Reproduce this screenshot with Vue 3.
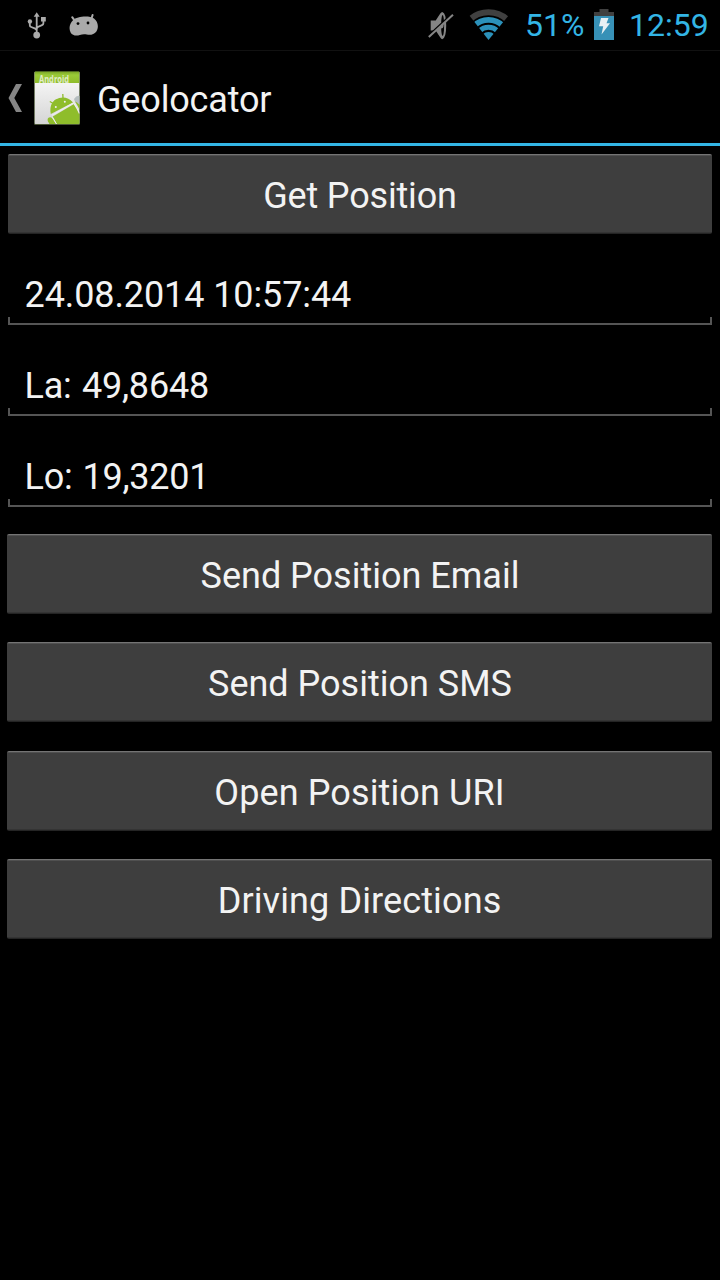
<script setup>
const fields = [
  { text: '24.08.2014 10:57:44', cls: 'date' },
  { text: 'La: 49,8648', cls: 'lat' },
  { text: 'Lo: 19,3201', cls: 'lon' },
]
const actions = [
  { text: 'Send Position Email', cls: 'email' },
  { text: 'Send Position SMS', cls: 'sms' },
  { text: 'Open Position URI', cls: 'uri' },
  { text: 'Driving Directions', cls: 'drive' },
]
</script>

<template>
  <main class="screen">
    <div class="status">
      <svg class="usb" width="20" height="28" viewBox="0 0 20 28" fill="none" stroke="#aaa" stroke-width="1.8">
        <path d="M9.700 4v18M2.800 9.500v3.700q0 1.300 1.400 1.800l4 1.600 1.500 1.600M16.400 8v3.200q0 1.300-1.400 1.900l-4.100 1.800-1.200 1.600" />
        <path d="M9.700 .3l3 4.400H6.700z" fill="#aaa" stroke="none" />
        <circle cx="2.900" cy="9.400" r="2.200" fill="#aaa" stroke="none" />
        <path d="M14 5h4.800v4.500H14z" fill="#aaa" stroke="none" />
        <circle cx="9.700" cy="23.100" r="3.400" fill="#aaa" stroke="none" />
      </svg>
      <svg class="droid" width="30" height="24" viewBox="0 0 30 24">
        <path d="M3.200 4.200l3 4.200M23.600 2l-1.400 4.500" stroke="#aaa" stroke-width="2" stroke-linecap="round" />
        <path d="M4 7.200C8 3.200 20 2.200 25 5.400c4.400 3.200 4.800 9.400 2.400 13-2.400 3.400-6.200 3.700-9.600 3.100-2.600-.5-4.400-.4-7 .5-3.800 1.200-7.400.4-9.200-2.600C-.4 15.600.5 10.500 4 7.200z" fill="#aaa" />
        <circle cx="9" cy="10.600" r="1.400" fill="#000" /><circle cx="19" cy="10" r="1.400" fill="#000" />
      </svg>
      <span class="grow"></span>
      <svg class="mute" width="26" height="30" viewBox="0 0 26 30">
        <path d="M2.700 8.500h5L12.300 1.500Q13.300 0 14.300 0 18.200 1 18.200 13.500T14.300 27.200q-1 0-2-1.700L7.700 18.500h-5z" fill="#858585" />
        <ellipse cx="14.600" cy="13.500" rx="1.500" ry="10.500" fill="#000" />
        <path d="M13 10.500q2.600.2 2.600 3t-2.600 3z" fill="#858585" />
        <path d="M.8 23.500L24.200 1.800" stroke="#000" stroke-width="2" />
        <path d="M.8 25L25 2.800" stroke="#858585" stroke-width="2" />
      </svg>
      <svg class="wifi" width="40" height="32" viewBox="0 0 40 32">
        <clipPath id="fan"><path d="M19.500 31L0 6V0h40v6z" /></clipPath>
        <g clip-path="url(#fan)" fill="none">
          <circle cx="19.500" cy="31" r="27.800" stroke="#404040" stroke-width="6" />
          <circle cx="19.500" cy="31" r="20.100" stroke="#2b91ba" stroke-width="5.600" />
          <circle cx="19.500" cy="31" r="12.800" stroke="#2b91ba" stroke-width="5" />
          <circle cx="19.500" cy="31" r="8" fill="#2b91ba" />
        </g>
      </svg>
      <span class="percent">51%</span>
      <svg class="battery" width="20" height="31" viewBox="0 0 20 31">
        <path d="M5.500 0h9v3H20v4H0V3h5.500z" fill="#404040" />
        <path d="M0 7h20v24H0z" fill="#3791b7" />
        <path d="M7 9h7.500l-2 5.300h3.500L7.500 25.500l1.700-8.300H5z" fill="#e8f0f4" />
      </svg>
      <span class="clock">12:59</span>
    </div>
    <header class="bar">
      <svg class="back" width="14" height="28" viewBox="0 0 14 28"><path d="M8 0h6L6.300 14 14 28H8L.5 14z" fill="#858585" /></svg>
      <svg class="app" width="46" height="54" viewBox="0 0 46 54">
        <defs>
          <linearGradient id="paper" x2="0" y2="1"><stop stop-color="#fcfcfc" /><stop offset="1" stop-color="#d5d5d5" /></linearGradient>
          <linearGradient id="lid" x2="0" y2="1"><stop stop-color="#79a526" /><stop offset=".3" stop-color="#9aca38" /><stop offset="1" stop-color="#8fbc2b" /></linearGradient>
          <clipPath id="page"><rect x=".5" width="45" height="53" rx="1" /></clipPath>
        </defs>
        <rect y=".5" width="46" height="53.500" rx="1.500" fill="#4b5738" />
        <g clip-path="url(#page)">
          <rect x=".5" y="1" width="45" height="52" fill="url(#paper)" />
          <rect x=".5" y=".5" width="45" height="11.500" fill="url(#lid)" />
          <text x="5" y="12" textLength="30" lengthAdjust="spacingAndGlyphs" class="brand">Android</text>
          <path d="M40 28q2.500-4 6-3v9q-5-1-6-6z" fill="#b6bec0" />
          <path d="M16.800 43C15.500 36 17.500 31 22 28.300S34 25 39 31.500z" fill="#8fbd2b" />
          <path d="M15.800 30.500l4 2.200M28.800 23l.2 4" stroke="#8fbd2b" stroke-width="1.300" />
          <circle cx="21.800" cy="36" r="1" fill="#eee" /><circle cx="30.800" cy="30.700" r="1" fill="#eee" />
          <path d="M18.800 45.500L40 33q4 5 6 10.500V54H23.500z" fill="#8fbd2b" />
          <path d="M18 44.300L39.600 32" stroke="#eee" stroke-width="1.200" />
          <path d="M40 32.500q3.300 5 5.500 10" stroke="#eee" stroke-width="1.300" fill="none" />
          <path d="M41 30.500q2.500 4 5 9v-6q-2-.4-3-2z" fill="#8fbd2b" />
          <path d="M14 50.500q-1.200-3 1-4t4 1.500L23 54h-7z" fill="#8fbd2b" />
          <path d="M18.500 46.500l4.500 7.500" stroke="#eee" stroke-width="1" />
        </g>
      </svg>
      <h1>Geolocator</h1>
    </header>
    <button class="btn first"><span class="get">Get Position</span></button>
    <div class="fields">
      <div v-for="f in fields" :key="f.cls" class="field"><span :class="f.cls">{{ f.text }}</span></div>
    </div>
    <div class="actions">
      <button v-for="a in actions" :key="a.cls" class="btn"><span :class="a.cls">{{ a.text }}</span></button>
    </div>
  </main>
</template>

<style>
body { background: #000; }
</style>

<style scoped>
.screen { box-sizing: border-box; width: 720px; height: 1280px; background: #000; color: #f3f3f3; font-family: Roboto, sans-serif; font-size: 36px; overflow: hidden; }
.status { box-sizing: border-box; height: 51px; display: flex; align-items: flex-start; border-bottom: 1px solid #111; color: #33b5e5; font-size: 32px; line-height: 38px; }
.status svg { flex: none; }
.usb { margin: 12px 0 0 27px; }
.droid { margin: 13px 0 0 22px; }
.grow { flex: 1; }
.mute { margin: 12px 15px 0 0; }
.wifi { margin: 9px 16px 0 0; }
.percent { width: 69px; margin-top: 6px; white-space: nowrap; }
.battery { margin: 9px 0 0; }
.clock { width: 91px; margin: 6px 0 0 15px; white-space: nowrap; }
.bar { box-sizing: border-box; height: 95px; border-bottom: 3px solid #33b5e5; display: flex; align-items: flex-start; }
.back { margin: 33px 0 0 8px; }
.app { margin: 20px 0 0 12px; }
.brand { font: bold 10px "Open Sans", sans-serif; fill: #e1edc8; }
h1 { margin: 28px 0 0 17px; font-size: 36px; font-weight: 400; line-height: 42px; letter-spacing: -.17px; white-space: nowrap; }
.btn { display: flex; justify-content: center; box-sizing: border-box; width: 705px; height: 80px; margin: 0 0 0 7px; padding: 21px 0 0; border: 0; border-radius: 2px; background: linear-gradient(#747474 0 1px, #505050 1px 2px, #3e3e3e 2px 78px, #343434 78px 79px, #242424 79px); color: #f3f3f3; font: 36px/42px Roboto, sans-serif; white-space: nowrap; }
.first { width: 704px; margin: 8px 0 0 8px; }
.get { letter-spacing: -.17px; }
.email, .sms { padding-left: 1px; }
.uri, .drive { letter-spacing: .12px; }
.fields { display: grid; grid-template-rows: repeat(3, 91px); width: 704px; margin-left: 8px; }
.field { box-sizing: border-box; padding: 40px 0 0 16.5px; line-height: 42px; white-space: nowrap; background: linear-gradient(#555, #555) 0 100% / 100% 2px no-repeat, linear-gradient(#555, #555) 0 100% / 2px 8px no-repeat, linear-gradient(#555, #555) 100% 100% / 2px 8px no-repeat; }
.date { letter-spacing: -.1px; }
.lat { letter-spacing: -.2px; word-spacing: 1.6px; }
.lon { letter-spacing: -.24px; word-spacing: 1.3px; }
.actions { display: grid; row-gap: 28.3px; margin-top: 27px; }
</style>
